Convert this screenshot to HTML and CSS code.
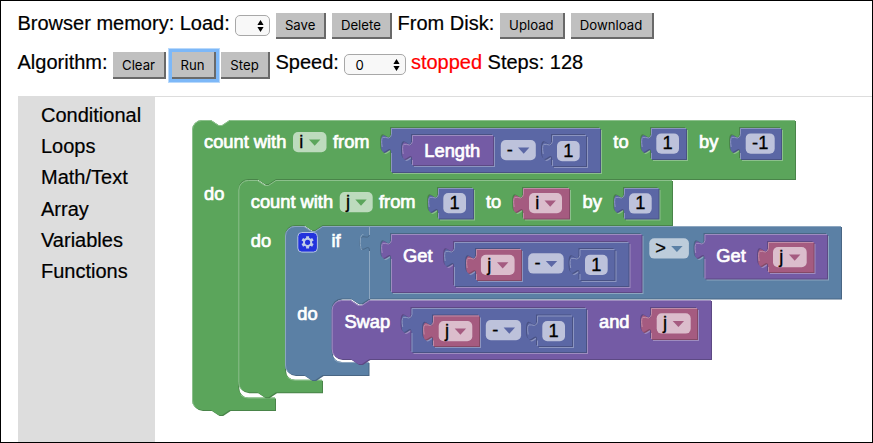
FILE: index.html
```html
<!DOCTYPE html>
<html lang="en">
<head>
<meta charset="utf-8">
<title>Algorithm blocks</title>
<link rel="stylesheet" href="styles.css">
</head>
<body>
<div class="page">
  <div class="toolbar">
    <span class="label">Browser memory: Load:</span>
    <div class="picker picker-small"><span></span><svg class="updown" viewBox="0 0 7 12"><path d="M3.5 0 6.6 5H.4zM3.5 12 .4 7h6.2z"/></svg></div>
    <button class="btn w-save">Save</button>
    <button class="btn w-delete">Delete</button>
    <span class="label">From Disk:</span>
    <button class="btn w-upload">Upload</button>
    <button class="btn w-download">Download</button>
  </div>
  <div class="toolbar toolbar-run">
    <span class="label">Algorithm:</span>
    <button class="btn w-clear">Clear</button>
    <button class="btn w-run focused">Run</button>
    <button class="btn w-step">Step</button>
    <span class="label">Speed:</span>
    <div class="picker picker-speed"><span>0</span><svg class="updown" viewBox="0 0 7 12"><path d="M3.5 0 6.6 5H.4zM3.5 12 .4 7h6.2z"/></svg></div>
    <span class="label stopped">stopped</span>
    <span class="label">Steps: 128</span>
  </div>
  <div class="workspace">
    <nav class="toolbox">
      <a>Conditional</a><a>Loops</a><a>Math/Text</a><a>Array</a><a>Variables</a><a>Functions</a>
    </nav>
    <svg class="canvas" id="canvas" viewBox="155 97 717 345"></svg>
  </div>
</div>
<script src="blocks.js"></script>
</body>
</html>
```
FILE: styles.css
```css
* { box-sizing: border-box; }
body {
  margin: 0;
  background: #fff;
  color: #000;
  font-family: "Liberation Sans", Arial, sans-serif;
  font-size: 20px;
}
.page {
  width: 873px;
  height: 443px;
  border: 1px solid #000;
  padding: 12px 0 0 17px;
  overflow: hidden;
  display: flex;
  flex-direction: column;
}
.toolbar {
  display: flex;
  align-items: flex-start;
  gap: 5.7px;
  height: 39px;
  flex: none;
  white-space: nowrap;
  margin-left: -.5px;
}
.toolbar-run { gap: 5.5px; height: 44px; }
.label { line-height: 22px; margin-top: -1px; -webkit-text-stroke: .2px currentColor; }
.stopped { color: #f00; margin-left: -1px; }
.btn {
  flex: none;
  height: 26px;
  padding: 0;
  border: 0 solid #696969;
  border-width: 0 2px 2px 0;
  background: #c0c0c0;
  color: #000;
  font: 13.2px Inter, sans-serif;
}
.toolbar-run .btn { height: 27px; }
.w-save { width: 50px; }
.w-delete { width: 60px; }
.w-upload { width: 65px; }
.w-download { width: 83px; }
.w-clear { width: 53px; }
.w-run { width: 44px; }
.w-step { width: 49px; }
.focused { box-shadow: 0 0 0 3px #7db8f8, 0 0 0 4px #b9d9fb; }
.picker {
  flex: none;
  display: flex;
  align-items: center;
  justify-content: space-between;
  height: 21px;
  margin-top: 2px;
  padding: 0 5px 0 10px;
  border: 1px solid #a8a8a8;
  border-radius: 5px;
  background: #f8f8f8;
  font: 13.2px Inter, sans-serif;
}
.picker-small { width: 35px; }
.picker-speed { width: 62px; }
.updown { width: 7px; height: 12px; }
.workspace { flex: 1; display: flex; }
.toolbox {
  width: 137px;
  background: #ddd;
  padding: 4px 0 0 23px;
  display: flex;
  flex-direction: column;
  -webkit-text-stroke: .2px currentColor;
}
.toolbox a { height: 31.2px; line-height: 31.2px; }
.canvas {
  width: 717px;
  height: 346px;
  border-top: 1px solid #ddd;
  font-size: 18.3px;
}
.block-label { fill: #fff; stroke: #fff; stroke-width: .7px; }
.field-bg { fill: #fff; fill-opacity: .6; }
.field-text { fill: #000; text-anchor: middle; stroke: #000; stroke-width: .3px; }
.edge { fill: none; stroke-width: 1px; }
```
FILE: blocks.js
```javascript
const canvas = document.getElementById('canvas');

const COLORS = {
  green:  { main: '#5ba55b', light: '#8cc08c', dark: '#498449' },
  steel:  { main: '#5b80a5', light: '#8ca6c0', dark: '#496684' },
  blue:   { main: '#5b67a5', light: '#8c95c0', dark: '#495284' },
  purple: { main: '#745ba5', light: '#9e8cc0', dark: '#5d4984' },
  pink:   { main: '#a55b80', light: '#c08ca6', dark: '#844966' }
};

function add(tag, attrs, text) {
  const el = document.createElementNS('http://www.w3.org/2000/svg', tag);
  for (const key in attrs) el.setAttribute(key, attrs[key]);
  if (text) el.textContent = text;
  canvas.appendChild(el);
}
function shape(d, fill, shift) {
  add('path', { d, fill, transform: `translate(${shift} ${shift})` });
}
function edge(d, stroke) {
  add('path', { d, stroke, class: 'edge' });
}

const NOTCH = 'l7.5,5 h3.7 l7.5,-5';
const NOTCH_BACK = 'l-7.5,5 h-3.7 l-7.5,-5';

// C-shaped block: (l,t) corner, r/m first row, i/f inner corner, fr/b foot.
function loopBlock(color, l, t, r, m, i, f, fr, b) {
  const c = COLORS[color];
  const d = `M${l},${t + 10} a10,10 0 0 1 10,-10 H${l + 19} ${NOTCH} H${r} V${m}
    H${i + 37.7} ${NOTCH_BACK} H${i + 10} a10,10 0 0 0 -10,10 V${f - 10}
    a10,10 0 0 0 10,10 H${fr} V${b} H${l + 37.7} ${NOTCH_BACK} H${l + 10} a10,10 0 0 1 -10,-10 Z`;
  shape(d, c.dark, 1);
  shape(d, c.main, 0);
  edge(`M${l + 3},${b - 3} a10,10 0 0 1 -2.5,-7 V${t + 10} a9.5,9.5 0 0 1 9.5,-9.5 H${l + 19} ${NOTCH} H${r}`, c.light);
  edge(`M${i + 2.5},${f - 2.5} a10,10 0 0 0 7.5,3 H${fr}`, c.light);
}

function plainBlock(color, l, t, r, b) {
  const c = COLORS[color];
  const d = `M${l},${t + 10} a10,10 0 0 1 10,-10 H${l + 19} ${NOTCH} H${r} V${b}
    H${l + 37.7} ${NOTCH_BACK} H${l + 10} a10,10 0 0 1 -10,-10 Z`;
  shape(d, c.dark, 1);
  shape(d, c.main, 0);
  edge(`M${l + 3},${b - 3} a10,10 0 0 1 -2.5,-7 V${t + 10} a9.5,9.5 0 0 1 9.5,-9.5 H${l + 19} ${NOTCH} H${r}`, c.light);
}

// Block with a puzzle tab, set in a socket of its parent's colour.
function valueBlock(color, parent, l, t, r, b) {
  const c = COLORS[color], p = COLORS[parent];
  const tab = 'c0,-12.5 -10,10 -10,-9.4 s10,3.1 10,-9.4';
  const d = `M${l},${t} H${r} V${b} H${l} V${t + 25} ${tab} Z`;
  shape(d, p.light, 2);
  shape(d, p.dark, -1);
  shape(d, c.dark, 1);
  shape(d, c.main, 0);
  edge(`M${l + .5},${b} V${t + 25}`, c.light);
  edge(`M${l - 8.8},${t + 19} q-1.4,-8 .6,-9.6 q3,-.2 5.6,.6 q2.6,-.4 3.1,-3.6 V${t + .5} H${r}`, c.light);
}

function label(text, x, y) {
  add('text', { x, y, class: 'block-label' }, text);
}
function field(text, x, y, w, tx) {
  add('rect', { x, y, width: w, height: 20.3, rx: 5, class: 'field-bg' });
  add('text', { x: tx === undefined ? x + w / 2 : tx, y: y + 16, class: 'field-text' }, text);
}
function dropdown(color, text, x, y, w, tx, ax) {
  field(text, x, y, w, tx);
  add('path', { d: `M${ax},${y + 7.6} h11.4 l-5.7,6.2 z`, fill: COLORS[color].main });
}

// Outer loop
loopBlock('green', 192, 120, 795, 179, 238.3, 397.5, 275, 410);
label('count with', 204, 148);
dropdown('green', 'i', 293, 132, 33.5, 301.3, 309);
label('from', 333, 148);
valueBlock('blue', 'green', 391, 128, 600, 172);
valueBlock('purple', 'blue', 412, 135, 493, 165);
label('Length', 424.3, 157);
dropdown('blue', '-', 500.8, 140, 35, 509.7, 518);
valueBlock('blue', 'blue', 552, 135, 586, 166);
field('1', 557, 141, 22.7);
label('to', 613.3, 148);
valueBlock('blue', 'green', 651, 128, 686, 159);
field('1', 656.3, 133.4, 22.7);
label('by', 699, 148);
valueBlock('blue', 'green', 740, 128, 781, 159);
field('-1', 745.7, 133.4, 29);
label('do', 204, 200);

// Inner loop
loopBlock('green', 238.3, 180, 672, 225, 285, 379.7, 322, 392.3);
label('count with', 250.8, 207.8);
dropdown('green', 'j', 339.7, 192, 33, 348, 355.3);
label('from', 379, 207.8);
valueBlock('blue', 'green', 438, 188, 473, 218.5);
field('1', 443.3, 193, 22.7);
label('to', 486, 207.8);
valueBlock('pink', 'green', 523, 188, 569, 218.5);
dropdown('pink', 'i', 529, 193, 33, 537.3, 544.5);
label('by', 582.5, 207.8);
valueBlock('blue', 'green', 624, 188, 658.5, 218.5);
field('1', 629, 193.3, 22.7);
label('do', 250.8, 246.8);

// Condition
loopBlock('steel', 285, 226, 841, 298.6, 331.7, 362, 368.5, 375);
add('rect', { x: 297.8, y: 232.5, width: 19.6, height: 19.6, rx: 4, fill: '#2233dd', stroke: '#b4c4e4' });
add('path', { d: 'M307.6,236.2 v3 M307.6,245.4 v3 M302.3,239.2 l2.6,1.5 M310.3,243.9 l2.6,1.5 M302.3,245.4 l2.6,-1.5 M310.3,240.7 l2.6,-1.5', stroke: '#c0cde8', 'stroke-width': 3, fill: 'none' });
add('circle', { cx: 307.6, cy: 242.3, r: 3.6, fill: '#2233dd', stroke: '#c0cde8', 'stroke-width': 2 });
label('if', 331.5, 247);
edge('M369.5,251.5 c0,-11 -8.5,6 -9.5,-8 c0,-14 9.5,0 9.5,-11 V226', COLORS.steel.dark);
edge('M369.5,299 V251', '#8ca6c0');
edge('M369.5,235 V226', '#8ca6c0');
edge('M362,250 q-2,-2 -1.6,-10 q.4,-6 3,-5.4', '#8ca6c0');
valueBlock('purple', 'steel', 391, 234, 641.5, 292);
label('Get', 403, 262.3);
valueBlock('blue', 'purple', 454, 242, 628.5, 286);
valueBlock('pink', 'blue', 476, 249, 521, 280);
dropdown('pink', 'j', 480.9, 254.7, 33.7, 489.3, 497);
dropdown('blue', '-', 528.2, 253.3, 35.5, 537.5, 545.8);
valueBlock('blue', 'blue', 579.5, 249, 614.5, 280);
field('1', 585, 254.7, 22.7);
dropdown('steel', '>', 649.3, 238.3, 39.6, 660.7, 671.2);
valueBlock('purple', 'steel', 704.5, 234, 827, 278.5);
label('Get', 716.3, 262.3);
valueBlock('pink', 'purple', 768, 242, 813.5, 272);
dropdown('pink', 'j', 773, 247, 33.7, 781.3, 789);
label('do', 297.3, 320.4);

// Swap
plainBlock('purple', 331.7, 300, 711, 359);
label('Swap', 344.4, 328.3);
valueBlock('blue', 'purple', 411.5, 308, 586, 352);
valueBlock('pink', 'blue', 433, 315.5, 479, 346);
dropdown('pink', 'j', 438.7, 321, 33.6, 447, 454.7);
dropdown('blue', '-', 485.8, 320, 35.3, 495.3, 503.6);
valueBlock('blue', 'blue', 537, 315.5, 572, 346);
field('1', 542.3, 321, 22.7);
label('and', 599, 328.3);
valueBlock('pink', 'purple', 651, 308, 697, 339);
dropdown('pink', 'j', 656.7, 313.3, 34, 665, 672.7);
```
